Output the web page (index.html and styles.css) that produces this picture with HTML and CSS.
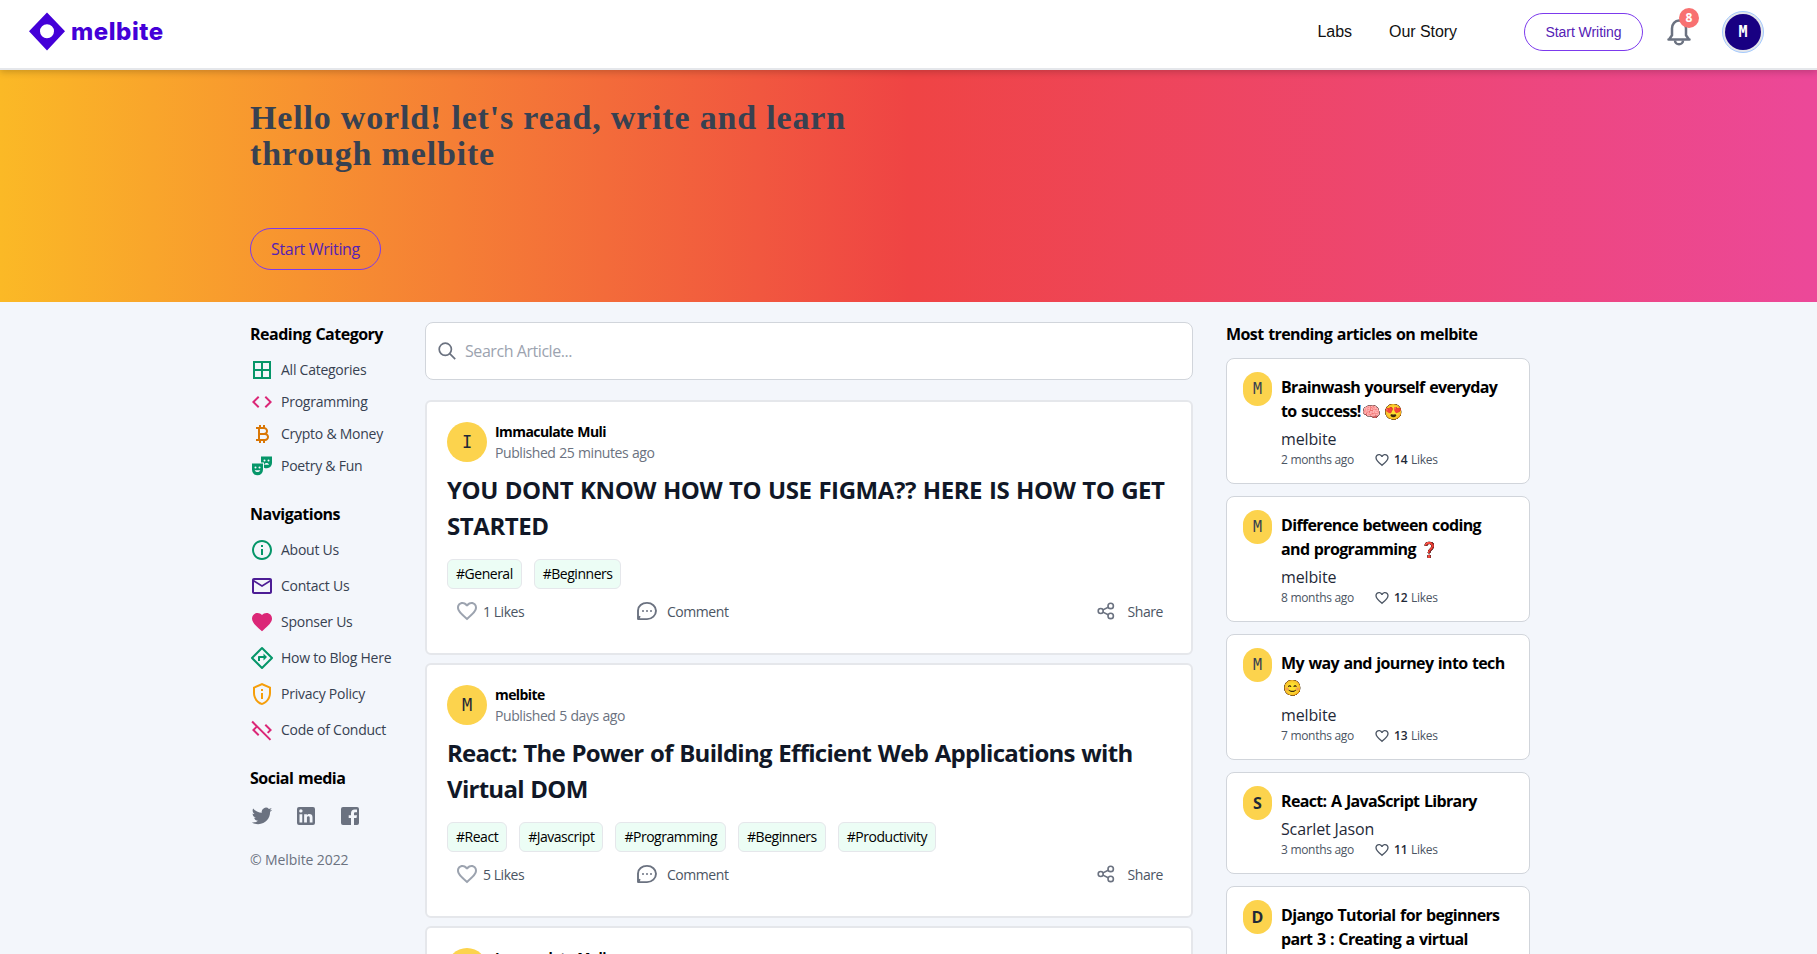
FILE: index.html
```html
<!DOCTYPE html>
<html lang="en">
<head>
<meta charset="utf-8">
<title>melbite</title>
<link rel="stylesheet" href="styles.css">
</head>
<body>
<svg class="sprite" aria-hidden="true">
  <symbol id="heart-line" viewBox="0 0 24 24"><path d="M16.5 3c-1.74 0-3.41.81-4.5 2.09C10.91 3.81 9.24 3 7.5 3 4.42 3 2 5.42 2 8.5c0 3.78 3.4 6.86 8.55 11.54L12 21.35l1.45-1.32C18.6 15.36 22 12.28 22 8.5 22 5.42 19.58 3 16.5 3zm-4.4 15.55l-.1.1-.1-.1C7.14 14.24 4 11.39 4 8.5 4 6.5 5.5 5 7.5 5c1.54 0 3.04.99 3.57 2.36h1.87C13.46 5.99 14.96 5 16.5 5c2 0 3.5 1.5 3.5 3.5 0 2.89-3.14 5.74-7.9 10.05z"/></symbol>
  <symbol id="comment" viewBox="0 0 24 24"><path d="M3 20.4V11.500C3 6.800 7 3.900 12 3.900s9 3.400 9 7.900-4 8.300-9 8.300H3.200l1.700-3" fill="none" stroke="currentColor" stroke-width="1.900" stroke-linejoin="round"/><circle cx="8" cy="12" r="1"/><circle cx="12" cy="12" r="1"/><circle cx="16" cy="12" r="1"/></symbol>
  <symbol id="share" viewBox="0 0 18 18"><g fill="none" stroke="currentColor" stroke-width="1.600"><circle cx="3.700" cy="9" r="2.500"/><circle cx="13.700" cy="3.900" r="2.700"/><circle cx="13.700" cy="13.900" r="2.700"/><path d="M6 7.900l5.200-2.700M6 10.100l5.200 2.600"/></g></symbol>
</svg>

<header class="topbar">
  <a class="logo">
    <svg width="36" height="39" viewBox="0 0 36 39"><path fill="#4400d8" fill-rule="evenodd" d="M18 .5L36 19.300 18 38.500 0 19.300zM18 12.300a7 7 0 1 0 0 14 7 7 0 0 0 0-14z"/></svg>
    <span class="logo-name">melbite</span>
  </a>
  <nav class="links"><a>Labs</a><a>Our Story</a></nav>
  <button class="write write-top">Start Writing</button>
  <div class="bell">
    <svg class="line" width="24" height="28" viewBox="0 0 24 28" stroke="#6b7280" stroke-width="2.500"><path d="M1.500 21.500h21M2 21.500l3-4.200V10.500C5 6 8 2.600 12 2.600s7 3.400 7 7.900v6.800l3 4.200" stroke-linejoin="round" stroke-linecap="round"/><path d="M8 22.500a4 3.800 0 0 0 8 0"/></svg>
    <span class="badge">8</span>
  </div>
  <div class="me"><span>M</span></div>
</header>

<section class="hero">
  <h1>Hello world! let's read, write and learn through melbite</h1>
  <button class="write write-hero">Start Writing</button>
</section>

<main class="page">
  <aside class="side">
    <h2>Reading Category</h2>
    <ul class="menu menu-cats">
      <li><svg class="green" viewBox="0 0 24 24"><path d="M3 3v18h18V3H3zm8 16H5v-6h6v6zm0-8H5V5h6v6zm8 8h-6v-6h6v6zm0-8h-6V5h6v6z"/></svg><span>All Categories</span></li>
      <li><svg class="pink" viewBox="0 0 24 24"><path d="M9.400 16.600L4.800 12l4.600-4.600L8 6l-6 6 6 6 1.400-1.400zm5.200 0l4.600-4.600-4.600-4.600L16 6l6 6-6 6-1.400-1.400z"/></svg><span>Programming</span></li>
      <li><svg class="orange" viewBox="0 0 24 24"><path d="M17.060 11.570c.59-.69.94-1.590.94-2.570 0-1.860-1.270-3.430-3-3.870V3h-2v2h-2V3H9v2H6v2h2v10H6v2h3v2h2v-2h2v2h2v-2c2.210 0 4-1.790 4-4 0-1.450-.78-2.730-1.940-3.430zM10 7h4c1.100 0 2 .9 2 2s-.9 2-2 2h-4V7zm5 10h-5v-4h5c1.100 0 2 .9 2 2s-.9 2-2 2z"/></svg><span>Crypto &amp; Money</span></li>
      <li><svg class="green" viewBox="0 0 24 24"><path fill-rule="evenodd" d="M2 9.500h11v6.300a5.500 5.500 0 0 1-11 0zM5.500 12.500a1 1 0 1 0 0 2 1 1 0 0 0 0-2zm4 0a1 1 0 1 0 0 2 1 1 0 0 0 0-2zM4.700 16.200c.6 2.400 5 2.400 5.600 0z"/><path fill-rule="evenodd" d="M11 2.500h11v6.300a5.500 5.500 0 0 1-8 4.900V8.500h-3zM14.500 5.500a1 1 0 1 0 0 2 1 1 0 0 0 0-2zm4 0a1 1 0 1 0 0 2 1 1 0 0 0 0-2zM14.200 10.800h4.800c-.6-2.300-4.200-2.300-4.800 0z"/></svg><span>Poetry &amp; Fun</span></li>
    </ul>
    <h2>Navigations</h2>
    <ul class="menu menu-nav">
      <li><svg class="green" viewBox="0 0 24 24"><path d="M11 7h2v2h-2zm0 4h2v6h-2zm1-9C6.480 2 2 6.480 2 12s4.480 10 10 10 10-4.480 10-10S17.520 2 12 2zm0 18c-4.410 0-8-3.590-8-8s3.590-8 8-8 8 3.590 8 8-3.590 8-8 8z"/></svg><span>About Us</span></li>
      <li><svg class="violet" viewBox="0 0 24 24"><path d="M22 6c0-1.100-.9-2-2-2H4c-1.100 0-2 .9-2 2v12c0 1.100.9 2 2 2h16c1.100 0 2-.9 2-2V6zm-2 0l-8 5-8-5h16zm0 12H4V8l8 5 8-5v10z"/></svg><span>Contact Us</span></li>
      <li><svg class="pink" viewBox="0 0 24 24"><path d="M12 21.350l-1.450-1.320C5.400 15.360 2 12.280 2 8.500 2 5.420 4.420 3 7.500 3c1.740 0 3.410.81 4.500 2.090C13.090 3.810 14.760 3 16.500 3 19.580 3 22 5.420 22 8.500c0 3.780-3.400 6.860-8.550 11.540L12 21.350z"/></svg><span>Sponser Us</span></li>
      <li><svg class="green" viewBox="0 0 24 24"><path d="M12 2L22 12 12 22 2 12z" fill="none" stroke="currentColor" stroke-width="2" stroke-linejoin="round"/><path d="M8 15h2v-3h3.500v2.500L17 11l-3.500-3.500V10H9c-.55 0-1 .45-1 1z"/></svg><span>How to Blog Here</span></li>
      <li><svg class="amber" viewBox="0 0 24 24"><path d="M12 1L3 5v6c0 5.550 3.840 10.740 9 12 5.160-1.260 9-6.450 9-12V5l-9-4zm7 10c0 4.520-2.980 8.690-7 9.930-4.020-1.240-7-5.410-7-9.930V6.300l7-3.110 7 3.110V11zM11 7h2v2h-2zM11 11h2v6h-2z"/></svg><span>Privacy Policy</span></li>
      <li><svg class="pink" viewBox="0 0 24 24"><path d="M19.170 12l-4.580-4.590L16 6l6 6-3.590 3.590L17 14.170 19.170 12zM1.390 4.220l4.190 4.190L2 12l6 6 1.410-1.410L4.830 12 7 9.830l12.780 12.780 1.410-1.410L2.810 2.810 1.390 4.220z"/></svg><span>Code of Conduct</span></li>
    </ul>
    <h2>Social media</h2>
    <div class="social">
      <svg viewBox="0 0 24 24"><path d="M22.162 5.656a8.384 8.384 0 0 1-2.402.658A4.196 4.196 0 0 0 21.600 4c-.82.488-1.719.83-2.656 1.015a4.182 4.182 0 0 0-7.126 3.814 11.874 11.874 0 0 1-8.620-4.370 4.168 4.168 0 0 0-.566 2.103c0 1.450.738 2.731 1.860 3.481a4.168 4.168 0 0 1-1.894-.523v.052a4.185 4.185 0 0 0 3.355 4.101 4.210 4.210 0 0 1-1.890.072A4.185 4.185 0 0 0 7.970 16.650a8.394 8.394 0 0 1-6.191 1.732 11.830 11.830 0 0 0 6.410 1.880c7.693 0 11.900-6.373 11.900-11.900 0-.18-.005-.362-.013-.54a8.496 8.496 0 0 0 2.087-2.165z"/></svg>
      <svg viewBox="0 0 24 24"><path d="M19 3a2 2 0 0 1 2 2v14a2 2 0 0 1-2 2H5a2 2 0 0 1-2-2V5a2 2 0 0 1 2-2h14m-.5 15.500v-5.300a3.260 3.260 0 0 0-3.260-3.260c-.85 0-1.840.52-2.320 1.300v-1.110h-2.790v8.370h2.790v-4.930c0-.77.62-1.400 1.390-1.400a1.400 1.400 0 0 1 1.400 1.400v4.930h2.790M6.880 8.560a1.680 1.680 0 0 0 1.680-1.680c0-.93-.75-1.690-1.680-1.690a1.690 1.690 0 0 0-1.690 1.690c0 .93.76 1.680 1.690 1.680m1.390 9.940v-8.370H5.500v8.370h2.770z"/></svg>
      <svg viewBox="0 0 24 24"><path d="M5 3a2 2 0 0 0-2 2v14a2 2 0 0 0 2 2h8v-7h-2.300v-2.800H13V9.300C13 6.900 14.400 5.500 16.600 5.500H19v2.700h-1.600c-1 0-1.400.5-1.400 1.400v1.600h3l-.5 2.800H16v7h3a2 2 0 0 0 2-2V5a2 2 0 0 0-2-2z"/></svg>
    </div>
    <p class="copy">© Melbite 2022</p>
  </aside>

  <section class="feed">
    <div class="search">
      <svg class="line" width="18" height="18" viewBox="0 0 18 18" stroke="#6b7280" stroke-width="1.700"><circle cx="7.300" cy="7.300" r="6.100"/><path d="M11.700 11.700l5.500 5.500"/></svg>
      <span>Search Article...</span>
    </div>

    <article class="post">
      <div class="by"><span class="face">I</span><div><b>Immaculate Muli</b><p>Published 25 minutes ago</p></div></div>
      <h3 class="caps">YOU DONT KNOW HOW TO USE FIGMA?? HERE IS HOW TO GET STARTED</h3>
      <div class="tags"><span>#General</span><span>#Beginners</span></div>
      <div class="acts">
        <span class="like"><svg class="i24"><use href="#heart-line"/></svg>1 Likes</span>
        <span class="talk"><svg class="i24"><use href="#comment"/></svg>Comment</span>
        <span class="share"><svg class="i18"><use href="#share"/></svg>Share</span>
      </div>
    </article>

    <article class="post">
      <div class="by"><span class="face">M</span><div><b>melbite</b><p>Published 5 days ago</p></div></div>
      <h3>React: The Power of Building Efficient Web Applications with Virtual DOM</h3>
      <div class="tags"><span>#React</span><span>#Javascript</span><span>#Programming</span><span>#Beginners</span><span>#Productivity</span></div>
      <div class="acts">
        <span class="like"><svg class="i24"><use href="#heart-line"/></svg>5 Likes</span>
        <span class="talk"><svg class="i24"><use href="#comment"/></svg>Comment</span>
        <span class="share"><svg class="i18"><use href="#share"/></svg>Share</span>
      </div>
    </article>

    <article class="post">
      <div class="by"><span class="face">I</span><div><b>Immaculate Muli</b></div></div>
    </article>
  </section>

  <aside class="trend">
    <h2>Most trending articles on melbite</h2>
    <article class="hot">
      <span class="dot">M</span>
      <div><h4>Brainwash yourself everyday<br>to success!<i class="emo">🧠</i><i class="emo">😍</i></h4><p class="who">melbite</p>
      <p class="meta"><span>2 months ago</span><svg><use href="#heart-line"/></svg><b>14</b> Likes</p></div>
    </article>
    <article class="hot">
      <span class="dot">M</span>
      <div><h4>Difference between coding<br>and programming <i class="emo narrow">❓</i></h4><p class="who">melbite</p>
      <p class="meta"><span>8 months ago</span><svg><use href="#heart-line"/></svg><b>12</b> Likes</p></div>
    </article>
    <article class="hot">
      <span class="dot">M</span>
      <div><h4>My way and journey into tech<br><i class="emo">😊</i></h4><p class="who">melbite</p>
      <p class="meta"><span>7 months ago</span><svg><use href="#heart-line"/></svg><b>13</b> Likes</p></div>
    </article>
    <article class="hot">
      <span class="dot strong">S</span>
      <div><h4>React: A JavaScript Library</h4><p class="who">Scarlet Jason</p>
      <p class="meta"><span>3 months ago</span><svg><use href="#heart-line"/></svg><b>11</b> Likes</p></div>
    </article>
    <article class="hot">
      <span class="dot strong">D</span>
      <div><h4>Django Tutorial for beginners<br>part 3 : Creating a virtual</h4></div>
    </article>
  </aside>
</main>
</body>
</html>
```
FILE: styles.css
```css
* { box-sizing: border-box; margin: 0; padding: 0; }
html, body { height: 954px; overflow: hidden; }
body { display: flex; flex-direction: column; background: #f3f6fb; font-family: "Open Sans", "Noto Sans", sans-serif; color: #000; }
svg { fill: currentColor; flex: none; }
svg.line { fill: none; }
ul { list-style: none; }
button { background: none; }
.sprite { display: none; }

/* Header */
.topbar { flex: none; height: 70px; display: flex; align-items: center; padding: 0 53px 5px 29px; background: #fff; border-bottom: 2px solid #e5e7eb; box-shadow: 0 2px 7px rgba(0, 0, 0, .2); position: relative; z-index: 1; font-family: "Liberation Sans", sans-serif; }
.logo { display: flex; align-items: center; gap: 6px; height: 39px; }
.logo-name { font: 800 24px/36px Inter, sans-serif; letter-spacing: .55px; color: #4400d8; }
.links { margin-left: auto; display: flex; gap: 37px; font-size: 16px; letter-spacing: -.05px; color: #111; }
.write { border: 1px solid #7c3aed; color: #5521b5; white-space: nowrap; }
.write-top { width: 119px; height: 38px; margin-left: 67px; border-radius: 19px; font: 14px "Liberation Sans", sans-serif; letter-spacing: -.05px; }
.bell { position: relative; width: 24px; height: 28px; margin-left: 24px; }
.badge { position: absolute; left: 12px; top: -10px; width: 20px; height: 20px; border-radius: 50%; background: #f87171; color: #fff; font: 700 12px/20px "Open Sans", sans-serif; text-align: center; }
.me { width: 42px; height: 42px; margin-left: 31px; border-radius: 50%; border: 1px solid #a4cafe; background: #e5e7eb; display: flex; align-items: center; justify-content: center; }
.me span { width: 36px; height: 36px; border-radius: 50%; background: #180082; color: #fff; font: 700 15px/37px "DejaVu Sans Mono", monospace; text-align: center; }

/* Banner */
.hero { flex: none; height: 232px; padding: 30px 0 0 250px; background: linear-gradient(to right, #fbb926, #ef4444, #ec4899); }
.hero h1 { height: 128px; width: 640px; font: 700 34px/36px "Liberation Serif", serif; letter-spacing: .82px; color: #374151; }
.write-hero { width: 131px; height: 42px; border-radius: 21px; font: 16px "Open Sans", sans-serif; letter-spacing: -.35px; }

/* Columns */
.page { flex: 1; min-height: 0; display: grid; grid-template-columns: 143px 768px 305px; column-gap: 32px; padding: 20px 0 0 250px; align-items: start; }
h2 { font-size: 16px; line-height: 24px; font-weight: 700; letter-spacing: -.5px; word-spacing: 1px; white-space: nowrap; }

/* Sidebar */
.menu li { display: flex; align-items: center; gap: 7px; font-size: 14px; letter-spacing: -.25px; color: #374151; white-space: nowrap; }
.menu span { padding-bottom: 2px; }
.menu svg { width: 24px; height: 24px; }
.menu-cats { padding: 8px 0 20px; }
.menu-cats li { height: 32px; }
.menu-nav { padding: 6px 0 18px; }
.menu-nav li { height: 36px; }
.green { color: #059669; }
.pink { color: #db2777; }
.orange { color: #d97706; }
.violet { color: #4c1d95; }
.amber { color: #f59e0b; }
.social { display: flex; gap: 20px; padding-top: 14px; color: #6b7280; }
.social svg { width: 24px; height: 24px; }
.copy { margin-top: 22px; font-size: 14px; line-height: 20px; letter-spacing: -.1px; color: #6b7280; }

/* Feed */
.search { height: 58px; display: flex; align-items: center; gap: 9px; padding-left: 12px; background: #fff; border: 1px solid #d1d5db; border-radius: 8px; font-size: 16px; letter-spacing: -.44px; color: #9ca3af; }
.post { height: 255px; margin-top: 8px; padding: 20px; background: #fff; border: 2px solid #e5e7eb; border-radius: 6px; }
.search + .post { margin-top: 20px; }
.by { display: flex; gap: 8px; height: 40px; }
.face { width: 40px; height: 40px; border-radius: 50%; background: #fcd34d; color: #1f2937; font: 17px/40px "DejaVu Sans Mono", monospace; text-align: center; }
.by b { display: block; font-size: 14px; line-height: 19px; font-weight: 700; letter-spacing: -.58px; word-spacing: 1px; }
.by p { font-size: 14px; line-height: 23px; letter-spacing: -.43px; word-spacing: .5px; color: #6b7280; }
.post h3 { margin: 10px -10px 15px 0; font-size: 24px; line-height: 36px; font-weight: 700; letter-spacing: -.72px; word-spacing: 1px; color: #111827; }
.post h3.caps { letter-spacing: -.43px; }
.tags { display: flex; gap: 12px; }
.tags span { height: 30px; padding: 0 8px; border: 1px solid #e5e7eb; border-radius: 6px; background: #ecfdf5; font-size: 14px; line-height: 28px; letter-spacing: -.48px; }
.acts { display: flex; align-items: center; height: 24px; margin-top: 10px; padding: 0 8px; font-size: 14px; letter-spacing: -.45px; color: #4b5563; }
.acts span { display: flex; align-items: center; }
.i24 { width: 24px; height: 24px; }
.i18 { width: 18px; height: 18px; color: #6b7280; }
.like { width: 180px; gap: 4px; }
.like svg { color: #9ca3af; }
.talk { gap: 8px; }
.talk svg { color: #6b7280; }
.share { margin-left: auto; gap: 13px; }

/* Trending */
.trend { margin-left: 1px; }
.trend h2 { letter-spacing: -.58px; margin-bottom: 12px; }
.hot { display: flex; gap: 9px; margin-bottom: 12px; padding: 13px 0 15px 16px; background: #fff; border: 1px solid #d1d5db; border-radius: 8px; }
.dot { flex: none; width: 29px; height: 34px; border-radius: 15px; background: #fcd34d; color: #374151; font: 15px/34px "DejaVu Sans Mono", monospace; text-align: center; }
.dot.strong { color: #1f2937; font: 700 16px/34px "Open Sans", sans-serif; }
.hot h4 { margin-top: 3px; font-size: 16px; line-height: 24px; font-weight: 700; letter-spacing: -.65px; word-spacing: 1px; white-space: nowrap; }
.emo { display: inline-block; width: 22px; height: 24px; vertical-align: top; font-size: 15px; font-weight: 400; font-style: normal; letter-spacing: 0; text-align: center; filter: drop-shadow(0 0 .6px #000) drop-shadow(0 0 .4px #000); }
.emo.narrow { width: 16px; }
.who { margin-top: 4px; font-size: 16px; line-height: 24px; letter-spacing: -.15px; color: #1f2937; }
.meta { display: flex; align-items: center; height: 17px; font-size: 12px; letter-spacing: -.3px; color: #4b5563; }
.meta span { width: 93px; }
.meta svg { width: 16px; height: 16px; margin-right: 4px; }
.meta b { font-weight: 600; width: 17px; letter-spacing: -.1px; color: #1f2937; }
```
